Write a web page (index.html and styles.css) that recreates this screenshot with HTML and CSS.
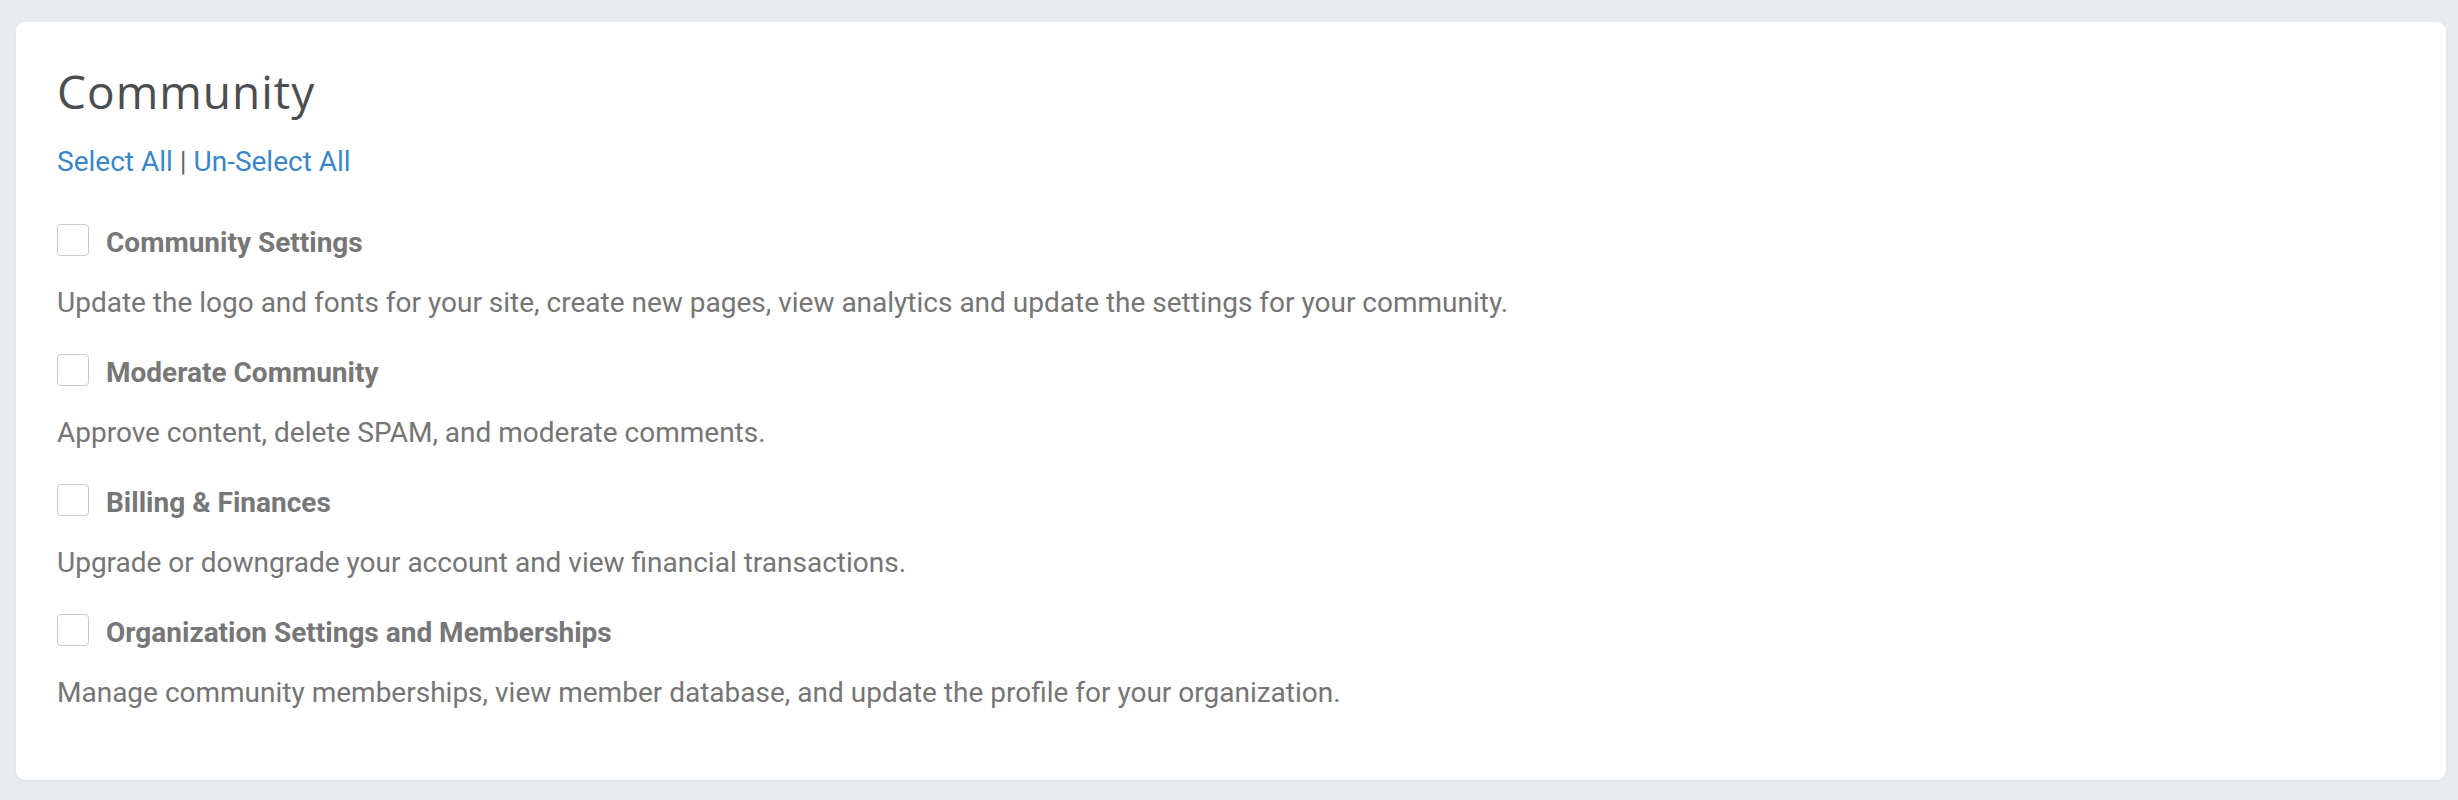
FILE: index.html
```html
<!DOCTYPE html>
<html lang="en">
<head>
<meta charset="utf-8">
<title>Community</title>
<link rel="stylesheet" href="styles.css">
</head>
<body>
<section class="card">
  <h2 class="card-title">Community</h2>
  <div class="select-links">
    <a href="#" class="link">Select All</a> <span class="sep">|</span> <a href="#" class="link">Un-Select All</a>
  </div>
  <ul class="perm-list">
    <li class="perm">
      <label class="perm-row"><span class="checkbox"></span><span class="perm-name">Community Settings</span></label>
      <p class="perm-desc">Update the logo and fonts for your site, create new pages, view analytics and update the settings for your community.</p>
    </li>
    <li class="perm">
      <label class="perm-row"><span class="checkbox"></span><span class="perm-name">Moderate Community</span></label>
      <p class="perm-desc">Approve content, delete SPAM, and moderate comments.</p>
    </li>
    <li class="perm">
      <label class="perm-row"><span class="checkbox"></span><span class="perm-name">Billing &amp; Finances</span></label>
      <p class="perm-desc">Upgrade or downgrade your account and view financial transactions.</p>
    </li>
    <li class="perm">
      <label class="perm-row"><span class="checkbox"></span><span class="perm-name">Organization Settings and Memberships</span></label>
      <p class="perm-desc">Manage community memberships, view member database, and update the profile for your organization.</p>
    </li>
  </ul>
</section>
</body>
</html>
```
FILE: styles.css
```css
html, body {
  margin: 0;
  padding: 0;
}
body {
  background: #e9ecef;
  font-family: Roboto, "Liberation Sans", sans-serif;
  padding: 22px 12px 19px 16px;
}
.card {
  background: #ffffff;
  border-radius: 9px;
  box-shadow: 0 1px 3px rgba(0, 0, 0, 0.06);
  padding: 42px 41px 69px 41px;
}
.card-title {
  margin: 0;
  font-family: "Open Sans", sans-serif;
  font-weight: 400;
  font-size: 46px;
  line-height: 54px;
  letter-spacing: 1px;
  color: #4b4d50;
}
.select-links {
  margin-top: 26px;
  font-size: 28px;
  line-height: 36px;
  color: #555;
}
.link {
  color: #3a86c8;
  text-decoration: none;
}
.sep {
  color: #666;
}
.perm-list {
  list-style: none;
  margin: 44px 0 0 0;
  padding: 0;
}
.perm + .perm {
  margin-top: 33px;
}
.perm-row {
  display: flex;
  align-items: flex-start;
  gap: 17px;
}
.checkbox {
  flex: none;
  width: 30px;
  height: 30px;
  border: 1px solid #c9c9c9;
  border-radius: 4px;
  background: #fff;
}
.perm-name {
  margin-top: 3px;
  font-weight: 700;
  font-size: 28px;
  line-height: 32px;
  color: #777777;
}
.perm-desc {
  margin: 26px 0 0 0;
  font-size: 28px;
  line-height: 36px;
  color: #757575;
}
```
